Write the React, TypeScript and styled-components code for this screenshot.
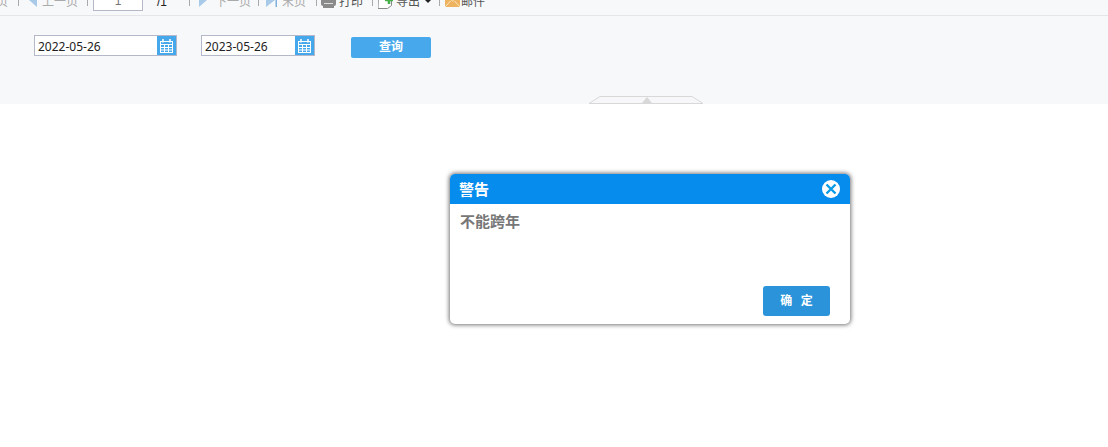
import React from 'react';
import styled, { createGlobalStyle } from 'styled-components';

const GlobalStyle = createGlobalStyle`
  html, body {
    margin: 0;
    padding: 0;
    background: #fff;
    font-family: "Liberation Sans", "Noto Sans CJK SC", sans-serif;
    overflow: hidden;
  }
`;

const CJK = `"Liberation Sans", "Noto Sans CJK SC", sans-serif`;

const Page = styled.div`
  width: 1108px;
  height: 447px;
  display: flex;
  flex-direction: column;
`;

const Toolbar = styled.div`
  height: 16px;
  box-sizing: border-box;
  border-bottom: 1px solid #e3e5e8;
  background: #f7f8fa;
  display: flex;
  align-items: flex-end;
  overflow: hidden;
  font-size: 12px;
`;

const ToolbarInner = styled.div`
  height: 24px;
  margin-bottom: 3px;
  margin-left: -16px;
  display: flex;
  align-items: center;
  flex: none;
`;

const ToolItem = styled.span<{ $color?: string; $after: number; $iconGap?: number }>`
  display: inline-flex;
  align-items: center;
  gap: ${(p) => p.$iconGap ?? 0}px;
  margin-right: ${(p) => p.$after}px;
  color: ${(p) => p.$color ?? '#aaa'};
  white-space: nowrap;
  font-family: ${CJK};
`;

const ToolLabel = styled.span`
  line-height: 16px;
  padding-top: 4px;
`;

const Divider = styled.i<{ $after: number }>`
  width: 1px;
  height: 12px;
  background: #aaa;
  margin-right: ${(p) => p.$after}px;
  flex: none;
`;

const PageInput = styled.div`
  width: 50px;
  height: 22px;
  border: 1px solid #b5b8c8;
  background: #fff;
  color: #777;
  text-align: center;
  margin-right: 14px;
  line-height: 22px;
  box-sizing: border-box;
`;

const Caret = styled.i`
  width: 0;
  height: 0;
  border-left: 3px solid transparent;
  border-right: 3px solid transparent;
  border-top: 3px solid #222;
  margin: 3px 0 0 2px;
`;

const FilterPanel = styled.div`
  height: 88px;
  background: #f7f8fa;
  padding: 19px 0 0 34px;
  box-sizing: border-box;
  position: relative;
  display: flex;
  align-items: flex-start;
`;

const DateField = styled.div<{ $width: number; $after: number }>`
  display: flex;
  height: 21px;
  width: ${(p) => p.$width}px;
  margin-right: ${(p) => p.$after}px;
  border: 1px solid #b5b8c8;
  box-sizing: border-box;
  background: #fff;
`;

const DateValue = styled.div`
  flex: 1;
  font-size: 12px;
  line-height: 21px;
  padding-left: 3px;
  color: #222;
  font-family: "Noto Sans", "Open Sans", sans-serif;
`;

const DateButton = styled.div`
  width: 19px;
  background: #45a8ea;
  display: flex;
  align-items: center;
  justify-content: center;
`;

const QueryButton = styled.div`
  width: 80px;
  height: 21px;
  margin-top: 2px;
  border-radius: 2px;
  background: #47a9eb;
  color: #fff;
  font-size: 12px;
  font-weight: bold;
  line-height: 21px;
  text-align: center;
  font-family: ${CJK};
`;

const CollapseHandle = styled.div`
  position: absolute;
  left: 589px;
  bottom: 0;
  width: 114px;
  height: 8px;
  display: flex;
`;

const ModalArea = styled.div`
  flex: 1;
  display: flex;
  align-items: flex-start;
  padding: 70px 0 0 450px;
`;

const Modal = styled.div`
  width: 400px;
  height: 150px;
  background: #fff;
  border-radius: 5px;
  box-shadow: 0 0 4px 1px rgba(0, 0, 0, 0.55);
  display: flex;
  flex-direction: column;
  overflow: hidden;
`;

const ModalHeader = styled.div`
  height: 30px;
  flex: none;
  box-sizing: border-box;
  background: #058ced;
  color: #fff;
  display: flex;
  align-items: center;
  justify-content: space-between;
  padding: 0 10px 1px 9px;
  font-size: 15px;
  font-weight: bold;
  font-family: ${CJK};
`;

const ModalBody = styled.div`
  flex: 1;
  padding: 8px 10px 0;
  color: #777;
  font-size: 15px;
  line-height: 20px;
  font-weight: bold;
  font-family: ${CJK};
`;

const ModalFooter = styled.div`
  display: flex;
  justify-content: flex-end;
  padding: 0 20px 8px;
`;

const ConfirmButton = styled.div`
  width: 67px;
  height: 30px;
  border-radius: 3px;
  background: #2a93d9;
  color: #fff;
  font-size: 12px;
  font-weight: bold;
  line-height: 30px;
  text-align: center;
  white-space: pre;
  word-spacing: 1px;
  font-family: ${CJK};
`;

function CalendarIcon() {
  return (
    <svg width="13" height="14" viewBox="0 0 13 14" fill="none" stroke="#fff" strokeWidth="1">
      <rect x="0.5" y="2.5" width="12" height="11" />
      <path d="M0.5 5.5h12M0.5 8.5h12M0.5 11h12M4.5 5.5v8M8.5 5.5v8" />
      <path d="M3 0v3.5M10 0v3.5" strokeWidth="1.5" />
    </svg>
  );
}

function LeftArrow() {
  return (
    <svg width="8" height="14" viewBox="0 0 8 14">
      <path d="M8 0v14L0 7z" fill="#a9c9e8" />
    </svg>
  );
}

function RightArrow() {
  return (
    <svg width="8" height="14" viewBox="0 0 8 14">
      <path d="M0 0v14l8-7z" fill="#a9c9e8" />
    </svg>
  );
}

function LastArrow() {
  return (
    <svg width="11" height="14" viewBox="0 0 11 14">
      <path d="M0 0v14l9-7z" fill="#a9c9e8" />
      <path d="M9.5 0h1.5v14H9.5z" fill="#7fb0de" />
    </svg>
  );
}

function PrintIcon() {
  return (
    <svg width="15" height="16" viewBox="0 0 15 16">
      <rect x="3" y="0.5" width="9" height="5" fill="none" stroke="#888" />
      <rect x="0" y="5" width="15" height="9" rx="2" fill="#8a8a8a" />
      <rect x="3" y="11" width="9" height="1" fill="#ddd" />
      <rect x="2" y="14" width="11" height="2" fill="#8a8a8a" />
    </svg>
  );
}

function ExportIcon() {
  return (
    <svg width="15" height="18" viewBox="0 0 15 18">
      <path d="M0.5 1.5h13v13l-4 3h-9.5z" fill="#fff" stroke="#888" />
      <path d="M7 9h8M11 5v8" stroke="#46b04a" strokeWidth="2.6" />
    </svg>
  );
}

function MailIcon() {
  return (
    <svg width="15" height="14" viewBox="0 0 15 14">
      <rect width="15" height="14" fill="#eeb35f" />
      <path d="M0 1l7.5 7L15 1M0 14l5.5-6M15 14l-5.5-6" fill="none" stroke="#fbe6c4" />
    </svg>
  );
}

function CloseIcon() {
  return (
    <svg width="18" height="18" viewBox="0 0 18 18">
      <circle cx="9" cy="9" r="9" fill="#fff" />
      <path d="M4.5 4.5l9 9M13.5 4.5l-9 9" stroke="#0a9be6" strokeWidth="2.4" />
    </svg>
  );
}

export default function App() {
  return (
    <Page>
      <GlobalStyle />
      <Toolbar>
        <ToolbarInner>
          <ToolItem $after={10}><ToolLabel>首页</ToolLabel></ToolItem>
          <Divider $after={10} />
          <ToolItem $after={9} $iconGap={5}>
            <LeftArrow />
            <ToolLabel>上一页</ToolLabel>
          </ToolItem>
          <Divider $after={5} />
          <PageInput>1</PageInput>
          <ToolItem $color="#222" $after={22}><ToolLabel>/1</ToolLabel></ToolItem>
          <Divider $after={9} />
          <ToolItem $after={7} $iconGap={8}>
            <RightArrow />
            <ToolLabel>下一页</ToolLabel>
          </ToolItem>
          <Divider $after={7} />
          <ToolItem $after={10} $iconGap={5}>
            <LastArrow />
            <ToolLabel>末页</ToolLabel>
          </ToolItem>
          <Divider $after={4} />
          <ToolItem $color="#555" $after={9} $iconGap={3}>
            <PrintIcon />
            <ToolLabel>打印</ToolLabel>
          </ToolItem>
          <Divider $after={5} />
          <ToolItem $color="#555" $after={8} $iconGap={3}>
            <ExportIcon />
            <ToolLabel>导出</ToolLabel>
            <Caret />
          </ToolItem>
          <Divider $after={5} />
          <ToolItem $color="#555" $after={0} $iconGap={1}>
            <MailIcon />
            <ToolLabel>邮件</ToolLabel>
          </ToolItem>
        </ToolbarInner>
      </Toolbar>
      <FilterPanel>
        <DateField $width={143} $after={24}>
          <DateValue>2022-05-26</DateValue>
          <DateButton><CalendarIcon /></DateButton>
        </DateField>
        <DateField $width={114} $after={36}>
          <DateValue>2023-05-26</DateValue>
          <DateButton><CalendarIcon /></DateButton>
        </DateField>
        <QueryButton>查询</QueryButton>
        <CollapseHandle>
          <svg width="114" height="8" viewBox="0 0 114 8">
            <path d="M0 7.5L11 0.5H103L114 7.5z" fill="#f7f7f9" stroke="#d8d8d8" />
            <path d="M53 7l5-6 5 6z" fill="#d8d8d8" />
          </svg>
        </CollapseHandle>
      </FilterPanel>
      <ModalArea>
        <Modal>
          <ModalHeader>
            警告
            <CloseIcon />
          </ModalHeader>
          <ModalBody>不能跨年</ModalBody>
          <ModalFooter>
            <ConfirmButton>确  定</ConfirmButton>
          </ModalFooter>
        </Modal>
      </ModalArea>
    </Page>
  );
}
